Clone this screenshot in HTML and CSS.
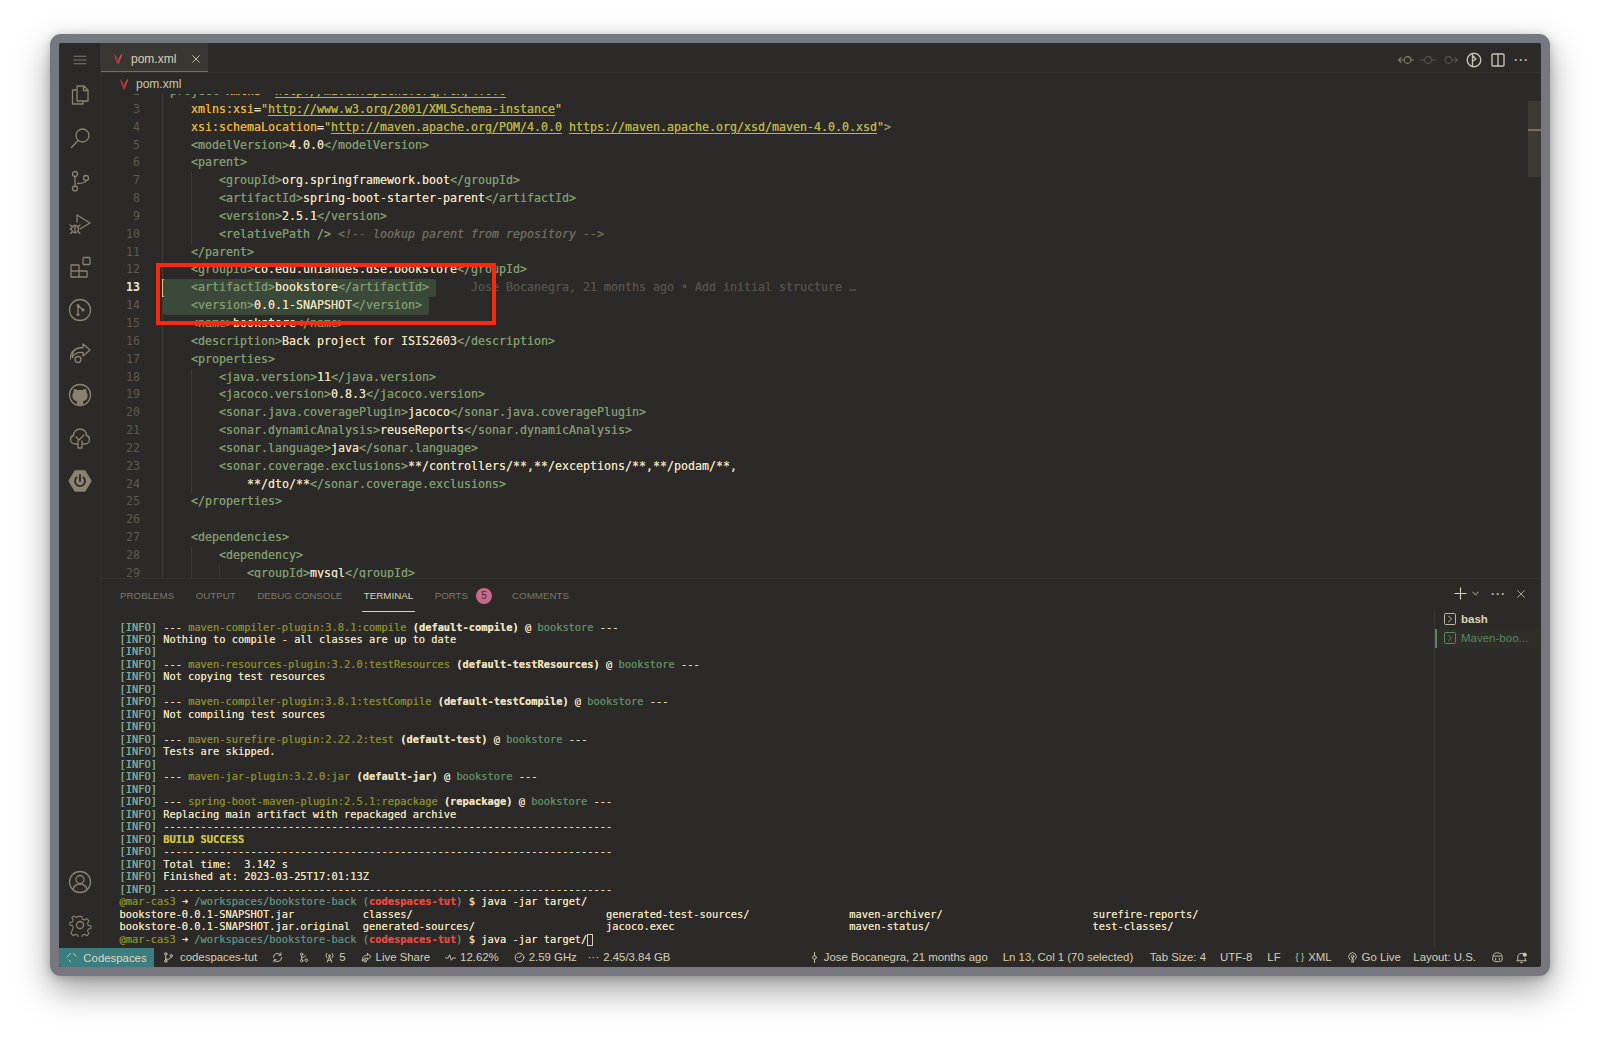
FILE: index.html
```html
<!DOCTYPE html>
<html lang="en">
<head>
<meta charset="utf-8">
<title>pom.xml</title>
<link rel="stylesheet" href="styles.css">
</head>
<body>
<svg class="defs" aria-hidden="true"><defs><linearGradient id="mv" x1="0" y1="1" x2="1" y2="0"><stop offset="0" stop-color="#7a2a6a"/><stop offset=".5" stop-color="#c8303a"/><stop offset="1" stop-color="#e88a2a"/></linearGradient></defs></svg>
<div class="window">
  <span class="grip"><i></i><i></i><i></i></span>
  <div class="main">
    <nav class="activity">
      <div class="menu"><svg class="ico" viewBox="0 0 24 24"><path d="M4 7h16M4 12h16M4 17h16"/></svg></div>
      <div class="act"><svg class="ico big" viewBox="0 0 24 24"><path d="M9 3h7l4 4v11H9zM15.500 3v4.500H20M9 7H4.500v14H15v-3"/></svg></div>
      <div class="act"><svg class="ico big" viewBox="0 0 24 24"><circle cx="14.500" cy="9.500" r="6.500"/><path d="M10 14.500 3.500 21.500"/></svg></div>
      <div class="act"><svg class="ico big" viewBox="0 0 24 24"><circle cx="7" cy="5" r="2.500"/><circle cx="7" cy="19.500" r="2.500"/><circle cx="18" cy="9" r="2.500"/><path d="M7 7.500v9.500M9.500 14.500c5 0 8.500-1 8.500-3"/></svg></div>
      <div class="act"><svg class="ico big" viewBox="0 0 24 24"><path d="M9 3l13 8-10 6M9 3v7"/><circle cx="7" cy="17" r="3.500"/><path d="M2 13l2.500 2M2 17h1.500M2.500 21.500l2-2M12 13l-2.500 2M12 21.500l-2-2M7 13.500v7"/></svg></div>
      <div class="act"><svg class="ico big" viewBox="0 0 24 24"><path d="M3 10h8v12H3zM3 16h16v6h-8M11 10v6"/><rect x="15" y="2.500" width="7" height="7" rx="1"/></svg></div>
      <div class="act"><svg class="ico big" viewBox="0 0 24 24"><circle cx="12" cy="12" r="10.500"/><circle cx="10" cy="7.500" r=".9"/><circle cx="10" cy="16.500" r=".9"/><circle cx="15" cy="12" r=".9"/><path d="M10 8v8M10.500 8l4 3.500"/></svg></div>
      <div class="act"><svg class="ico big" viewBox="0 0 24 24"><path d="M15 3l7 6-7 6v-3.500c-6-.5-9 1-10.500 5-1-6 3-10 10.500-10zM2.500 18c-.5-5 2-9 7-11"/><circle cx="10" cy="18.500" r="3"/></svg></div>
      <div class="act"><svg class="ico big" viewBox="0 0 24 24"><circle cx="12" cy="12" r="10.500"/><path class="solid" d="M9.500 21v-3.500c-3-.2-4.500-2-4.500-5 0-1.200.4-2.200 1.100-3-.2-.8-.1-1.800.3-2.800 1 0 2 .5 2.800 1.100a9 9 0 0 1 5.600 0c.8-.6 1.800-1.100 2.800-1.100.4 1 .5 2 .3 2.800.7.800 1.100 1.800 1.100 3 0 3-1.500 4.800-4.500 5V21z"/></svg></div>
      <div class="act"><svg class="ico big" viewBox="0 0 24 24"><path d="M10 18H7.500c-3 0-5-2-5-4.500 0-2 1-3.500 3-4 0-4 3-6.500 6.500-6.500s6.500 2.500 6.500 6.500c2 .5 3 2 3 4 0 2.500-2 4.500-5 4.500H14M10 15v7h4v-7M8 11l3 3 5-5"/></svg></div>
      <div class="act"><svg class="ico big" viewBox="0 0 24 24"><path class="solid" d="M7 2h10l6 10-6 10H7L1 12z"/><path class="cut" d="M8.500 8.500a5 5 0 1 0 7 0M12 6v6"/></svg></div>
      <div class="fill"></div>
      <div class="act"><svg class="ico big" viewBox="0 0 24 24"><circle cx="12" cy="12" r="10.500"/><circle cx="12" cy="9.500" r="4"/><path d="M5 19.500c1-3.500 3.500-5.500 7-5.500s6 2 7 5.500"/></svg></div>
      <div class="act"><svg class="ico big" viewBox="0 0 24 24"><circle cx="12" cy="12" r="3.500"/><path d="M10 2h4l.7 3.200 2.300 1 2.800-1.700 2.600 2.800-1.700 2.700 1 2.300 3 .7v3l-3 .7-1 2.300 1.700 2.700-2.600 2.800-2.800-1.700-2.300 1-.7 3h-4l-.7-3-2.300-1-2.800 1.700-2.600-2.800L4.100 15l-1-2.300-3-.7V9l3-.7 1-2.300L2.400 3.300 5 1.500l2.800 1.700 1.500-.8z" transform="translate(1.700 1.700) scale(.86)"/></svg></div>
    </nav>
    <div class="workbench">
      <header class="tabs">
        <div class="tab">
          <svg class="maven" viewBox="0 0 14 14"><path d="M2 1l4 12h2L12 1C9.500 3 8 6 7 9 6 6 4.500 3 2 1z"/></svg>
          <span>pom.xml</span>
          <svg class="ico close" viewBox="0 0 12 12"><path d="M2 2l8 8M10 2l-8 8"/></svg>
        </div>
        <div class="tools">
          <svg class="ico tool" viewBox="0 0 24 16"><circle cx="14" cy="8" r="4.500"/><path d="M2 8h7M5.500 4.500 2 8l3.500 3.500M19 8h3"/></svg>
          <svg class="ico tool dim" viewBox="0 0 24 16"><circle cx="12" cy="8" r="4.500"/><path d="M2 8h5M17 8h5"/></svg>
          <svg class="ico tool dim" viewBox="0 0 24 16"><circle cx="10" cy="8" r="4.500"/><path d="M15 8h7M18.500 4.500 22 8l-3.500 3.500"/></svg>
          <svg class="ico tool lit" viewBox="0 0 16 16"><circle cx="8" cy="8" r="6.800"/><path d="M6.500 2v12M7 4l3 3-3 2"/></svg>
          <svg class="ico tool lit" viewBox="0 0 16 16"><rect x="2" y="2" width="12" height="12" rx="1"/><path d="M8 2v12"/></svg>
          <span class="dots">···</span>
        </div>
      </header>
      <div class="crumb">
        <svg class="maven" viewBox="0 0 14 14"><path d="M2 1l4 12h2L12 1C9.500 3 8 6 7 9 6 6 4.500 3 2 1z"/></svg>
        <span>pom.xml</span>
      </div>
      <section class="editor">
        <div class="lines">
          <div class="line"><span class="ln">2</span><code class="code"><span class="t">&lt;project</span> <span class="a">xmlns</span>=<span class="s">"</span><span class="u">http://maven.apache.org/POM/4.0.0</span><span class="s">"</span></code></div>
          <div class="line"><span class="ln">3</span><code class="code">    <span class="a">xmlns:xsi</span>=<span class="s">"</span><span class="u">http://www.w3.org/2001/XMLSchema-instance</span><span class="s">"</span></code></div>
          <div class="line"><span class="ln">4</span><code class="code">    <span class="a">xsi:schemaLocation</span>=<span class="s">"</span><span class="u">http://maven.apache.org/POM/4.0.0</span> <span class="u">https://maven.apache.org/xsd/maven-4.0.0.xsd</span><span class="s">"</span><span class="t">&gt;</span></code></div>
          <div class="line"><span class="ln">5</span><code class="code">    <span class="t">&lt;modelVersion&gt;</span>4.0.0<span class="t">&lt;/modelVersion&gt;</span></code></div>
          <div class="line"><span class="ln">6</span><code class="code">    <span class="t">&lt;parent&gt;</span></code></div>
          <div class="line"><span class="ln">7</span><code class="code g2">        <span class="t">&lt;groupId&gt;</span>org.springframework.boot<span class="t">&lt;/groupId&gt;</span></code></div>
          <div class="line"><span class="ln">8</span><code class="code g2">        <span class="t">&lt;artifactId&gt;</span>spring-boot-starter-parent<span class="t">&lt;/artifactId&gt;</span></code></div>
          <div class="line"><span class="ln">9</span><code class="code g2">        <span class="t">&lt;version&gt;</span>2.5.1<span class="t">&lt;/version&gt;</span></code></div>
          <div class="line"><span class="ln">10</span><code class="code g2">        <span class="t">&lt;relativePath /&gt;</span> <span class="c">&lt;!-- lookup parent from repository --&gt;</span></code></div>
          <div class="line"><span class="ln">11</span><code class="code">    <span class="t">&lt;/parent&gt;</span></code></div>
          <div class="line"><span class="ln">12</span><code class="code">    <span class="t">&lt;groupId&gt;</span>co.edu.uniandes.dse.bookstore<span class="t">&lt;/groupId&gt;</span></code></div>
          <div class="line cur"><span class="ln">13</span><code class="code"><span class="sel">    <span class="t">&lt;artifactId&gt;</span>bookstore<span class="t">&lt;/artifactId&gt;</span> </span><span class="blame">     Jose Bocanegra, 21 months ago • Add initial structure …</span></code></div>
          <div class="line"><span class="ln">14</span><code class="code"><span class="sel">    <span class="t">&lt;version&gt;</span>0.0.1-SNAPSHOT<span class="t">&lt;/version&gt;</span> </span></code></div>
          <div class="line"><span class="ln">15</span><code class="code">    <span class="t">&lt;name&gt;</span>bookstore<span class="t">&lt;/name&gt;</span></code></div>
          <div class="line"><span class="ln">16</span><code class="code">    <span class="t">&lt;description&gt;</span>Back project for ISIS2603<span class="t">&lt;/description&gt;</span></code></div>
          <div class="line"><span class="ln">17</span><code class="code">    <span class="t">&lt;properties&gt;</span></code></div>
          <div class="line"><span class="ln">18</span><code class="code g2">        <span class="t">&lt;java.version&gt;</span>11<span class="t">&lt;/java.version&gt;</span></code></div>
          <div class="line"><span class="ln">19</span><code class="code g2">        <span class="t">&lt;jacoco.version&gt;</span>0.8.3<span class="t">&lt;/jacoco.version&gt;</span></code></div>
          <div class="line"><span class="ln">20</span><code class="code g2">        <span class="t">&lt;sonar.java.coveragePlugin&gt;</span>jacoco<span class="t">&lt;/sonar.java.coveragePlugin&gt;</span></code></div>
          <div class="line"><span class="ln">21</span><code class="code g2">        <span class="t">&lt;sonar.dynamicAnalysis&gt;</span>reuseReports<span class="t">&lt;/sonar.dynamicAnalysis&gt;</span></code></div>
          <div class="line"><span class="ln">22</span><code class="code g2">        <span class="t">&lt;sonar.language&gt;</span>java<span class="t">&lt;/sonar.language&gt;</span></code></div>
          <div class="line"><span class="ln">23</span><code class="code g2">        <span class="t">&lt;sonar.coverage.exclusions&gt;</span>**/controllers/**,**/exceptions/**,**/podam/**,</code></div>
          <div class="line"><span class="ln">24</span><code class="code g2">            **/dto/**<span class="t">&lt;/sonar.coverage.exclusions&gt;</span></code></div>
          <div class="line"><span class="ln">25</span><code class="code">    <span class="t">&lt;/properties&gt;</span></code></div>
          <div class="line"><span class="ln">26</span><code class="code"> </code></div>
          <div class="line"><span class="ln">27</span><code class="code">    <span class="t">&lt;dependencies&gt;</span></code></div>
          <div class="line"><span class="ln">28</span><code class="code g2">        <span class="t">&lt;dependency&gt;</span></code></div>
          <div class="line"><span class="ln">29</span><code class="code g3">            <span class="t">&lt;groupId&gt;</span>mysql<span class="t">&lt;/groupId&gt;</span></code></div>
        </div>
        <div class="scroll"><i></i></div>
        <div class="redbox"></div>
      </section>
      <section class="panel">
        <div class="ptabs">
          <span class="ptab">Problems</span>
          <span class="ptab">Output</span>
          <span class="ptab">Debug Console</span>
          <span class="ptab on">Terminal</span>
          <span class="ptab ports">Ports</span><b class="badge">5</b>
          <span class="ptab">Comments</span>
          <div class="pacts">
            <svg class="ico plus" viewBox="0 0 14 14"><path d="M7 1v12M1 7h12"/></svg>
            <svg class="ico chev" viewBox="0 0 10 10"><path d="M2 3.500l3 3 3-3"/></svg>
            <span class="dots">···</span>
            <svg class="ico pclose" viewBox="0 0 12 12"><path d="M2 2l8 8M10 2l-8 8"/></svg>
          </div>
        </div>
        <div class="pbody">
<pre class="term"><span class="i">[INFO]</span> <span class="k">---</span> <span class="o">maven-compiler-plugin:3.8.1:compile</span> <b>(default-compile)</b> @ <span class="g">bookstore</span> <span class="k">---</span>
<span class="i">[INFO]</span> Nothing to compile - all classes are up to date
<span class="i">[INFO]</span>
<span class="i">[INFO]</span> <span class="k">---</span> <span class="o">maven-resources-plugin:3.2.0:testResources</span> <b>(default-testResources)</b> @ <span class="g">bookstore</span> <span class="k">---</span>
<span class="i">[INFO]</span> Not copying test resources
<span class="i">[INFO]</span>
<span class="i">[INFO]</span> <span class="k">---</span> <span class="o">maven-compiler-plugin:3.8.1:testCompile</span> <b>(default-testCompile)</b> @ <span class="g">bookstore</span> <span class="k">---</span>
<span class="i">[INFO]</span> Not compiling test sources
<span class="i">[INFO]</span>
<span class="i">[INFO]</span> <span class="k">---</span> <span class="o">maven-surefire-plugin:2.22.2:test</span> <b>(default-test)</b> @ <span class="g">bookstore</span> <span class="k">---</span>
<span class="i">[INFO]</span> Tests are skipped.
<span class="i">[INFO]</span>
<span class="i">[INFO]</span> <span class="k">---</span> <span class="o">maven-jar-plugin:3.2.0:jar</span> <b>(default-jar)</b> @ <span class="g">bookstore</span> <span class="k">---</span>
<span class="i">[INFO]</span>
<span class="i">[INFO]</span> <span class="k">---</span> <span class="o">spring-boot-maven-plugin:2.5.1:repackage</span> <b>(repackage)</b> @ <span class="g">bookstore</span> <span class="k">---</span>
<span class="i">[INFO]</span> Replacing main artifact with repackaged archive
<span class="i">[INFO]</span> ------------------------------------------------------------------------
<span class="i">[INFO]</span> <b class="y">BUILD SUCCESS</b>
<span class="i">[INFO]</span> ------------------------------------------------------------------------
<span class="i">[INFO]</span> Total time:  3.142 s
<span class="i">[INFO]</span> Finished at: 2023-03-25T17:01:13Z
<span class="i">[INFO]</span> ------------------------------------------------------------------------
<span class="o">@mar-cas3</span> ➜ <span class="p">/workspaces/bookstore-back</span> <span class="p">(</span><b class="r">codespaces-tut</b><span class="p">)</span> $ java -jar target/
bookstore-0.0.1-SNAPSHOT.jar           classes/                               generated-test-sources/                maven-archiver/                        surefire-reports/
bookstore-0.0.1-SNAPSHOT.jar.original  generated-sources/                     jacoco.exec                            maven-status/                          test-classes/
<span class="o">@mar-cas3</span> ➜ <span class="p">/workspaces/bookstore-back</span> <span class="p">(</span><b class="r">codespaces-tut</b><span class="p">)</span> $ java -jar target/<span class="caret"> </span></pre>
          <aside class="tlist">
            <div class="titem"><svg class="ico tic" viewBox="0 0 12 12"><rect x=".5" y=".5" width="11" height="11" rx="1"/><path d="M4.500 3l3 3-3 3"/></svg><b>bash</b></div>
            <div class="titem act2"><svg class="ico tic" viewBox="0 0 12 12"><rect x=".5" y=".5" width="11" height="11" rx="1"/><path d="M4.500 3l3 3-3 3"/></svg><span>Maven-boo...</span></div>
          </aside>
        </div>
      </section>
    </div>
  </div>
  <footer class="status">
    <div class="remote"><svg class="ico sic" viewBox="0 0 12 12"><path d="M5 1.500 1 5.500M5 10.500 3 8.500M8 1.500l3 3"/></svg><span>Codespaces</span></div>
    <div class="st first"><svg class="ico sic" viewBox="0 0 12 12"><circle cx="3" cy="2" r="1.300"/><circle cx="3" cy="10" r="1.300"/><circle cx="9" cy="4" r="1.300"/><path d="M3 3.300v5.400M3 8c4 0 6-1 6-2.700"/></svg><span>codespaces-tut</span></div>
    <div class="st"><svg class="ico sic" viewBox="0 0 12 12"><path d="M1.500 6a4.500 4.500 0 0 1 8-2.800M10.500 6a4.500 4.500 0 0 1-8 2.800M9.800 1v2.500H7.300M2.200 11V8.500h2.500"/></svg></div>
    <div class="st"><svg class="ico sic" viewBox="0 0 12 12"><circle cx="4" cy="2.500" r="1.300"/><circle cx="4" cy="9.500" r="1.300"/><path d="M4 4v4M4 6c3 0 4-1 4-2M8 8a1.500 1.500 0 1 0 .1-.1"/></svg></div>
    <div class="st"><svg class="ico sic" viewBox="0 0 12 12"><circle cx="6" cy="4" r="1"/><path d="M6 5l-2.500 6M6 5l2.500 6M3 1.500a4 4 0 0 0 0 5M9 1.500a4 4 0 0 1 0 5M4.200 9h3.600"/></svg><span>5</span></div>
    <div class="st"><svg class="ico sic" viewBox="0 0 12 12"><path d="M7 1.500l4 3.500-4 3.500V6.500C4 6.500 2.500 7.500 1.500 10 1 6 3 3.500 7 3.500z"/><circle cx="4.500" cy="9.700" r="1.400"/></svg><span>Live Share</span></div>
    <div class="st"><svg class="ico sic" viewBox="0 0 12 12"><path d="M.5 6.500h3L5 3l2 6 1.500-2.500h3"/></svg><span>12.62%</span></div>
    <div class="st"><svg class="ico sic" viewBox="0 0 12 12"><circle cx="6" cy="6" r="4.800"/><path d="M6 6l2-2.500M3.500 6h.5"/></svg><span>2.59 GHz</span></div>
    <div class="st mem"><span>···</span><span>2.45/3.84 GB</span></div>
    <div class="fill"></div>
    <div class="st"><svg class="ico sic" viewBox="0 0 12 12"><circle cx="6" cy="6" r="2"/><path d="M6 .5V4M6 8v3.500"/></svg><span>Jose Bocanegra, 21 months ago</span></div>
    <div class="st">Ln 13, Col 1 (70 selected)</div>
    <div class="st wide">Tab Size: 4</div>
    <div class="st close-l">UTF-8</div>
    <div class="st">LF</div>
    <div class="st lang"><span class="brace">{ }</span><span>XML</span></div>
    <div class="st"><svg class="ico sic" viewBox="0 0 12 12"><circle cx="6" cy="5" r="1.500"/><path d="M3 8a4.200 4.200 0 1 1 6 0M6 6.500 5 11h2z"/></svg><span>Go Live</span></div>
    <div class="st near">Layout: U.S.</div>
    <div class="st bot"><svg class="ico sic big2" viewBox="0 0 14 14"><path d="M2 7c0-3 1-5 5-5s5 2 5 5v3c-2 2-8 2-10 0zM3 5.500h8M5 8v1.500M9 8v1.500"/></svg></div>
    <div class="st bell"><svg class="ico sic big2" viewBox="0 0 14 14"><path d="M3 10V6.500a4 4 0 0 1 6-3.500M2 10.500h10M11 8v2.500M6 12.500h2"/><circle class="dotfill" cx="10.500" cy="4" r="1.800"/></svg></div>
  </footer>
</div>
</body>
</html>
```
FILE: styles.css
```css
* { box-sizing: border-box; }
html, body { margin: 0; height: 100%; background: #fff; overflow: hidden; }
body { padding: 34px 50px 66px; font-family: "Liberation Sans", Arial, sans-serif; }
.defs { display: block; width: 0; height: 0; }

.window {
  position: relative;
  height: 942px;
  border: 9px solid #77777f;
  border-radius: 11px;
  background: #2b2a28;
  display: flex;
  flex-direction: column;
  box-shadow: 0 14px 34px rgba(0, 0, 0, .38), 0 2px 10px rgba(0, 0, 0, .2);
  overflow: hidden;
}
.grip {
  position: absolute;
  top: 3px;
  right: -7px;
  display: flex;
  flex-direction: column;
  gap: 2px;
}
.grip i { width: 4px; height: 4px; border-radius: 50%; background: #a9a9af; }

.main { flex: 1; min-height: 0; display: flex; }
.fill { flex: 1; }

.ico { fill: none; stroke: #8b8270; stroke-width: 1.4; stroke-linecap: round; stroke-linejoin: round; }

.activity { width: 42px; flex: none; display: flex; flex-direction: column; align-items: center; padding-bottom: 2px; border-right: 1px solid #353330; }
.menu { height: 31px; width: 100%; display: flex; align-items: center; justify-content: center; padding-top: 2px; }
.menu .ico { width: 18px; height: 18px; stroke-width: 1.2; }
.act { height: 42.86px; width: 100%; flex: none; display: flex; align-items: center; justify-content: center; }
.big { width: 24px; height: 24px; stroke-width: 1.3; }
.solid { fill: #8b8270; }
.cut { stroke: #2b2a28; stroke-width: 1.8; }

.workbench { flex: 1; min-width: 0; display: flex; flex-direction: column; }

.tabs { height: 30px; flex: none; display: flex; align-items: stretch; justify-content: space-between; border-bottom: 1px solid #353330; }
.tab {
  width: 107px;
  display: flex;
  align-items: center;
  padding: 4px 0 0 11px;
  background: #393733;
  border-bottom: 1px solid #5d7c59;
  color: #d9d1b4;
  font-size: 12px;
}
.maven { width: 12px; height: 12px; fill: url(#mv); stroke: none; }
.tab span { margin-left: 7px; }
.close { width: 10px; height: 10px; margin-left: 15px; stroke: #bdb6a2; stroke-width: 1.2; }

.tools { display: flex; align-items: center; gap: 4px; padding: 4px 12px 0 0; }
.tool { width: 18px; height: 14px; }
.tool.dim { stroke: #5c5a52; }
.tool.lit { stroke: #c4c0b4; width: 16px; height: 16px; margin-left: 3.5px; }
.dots { color: #bdb6a2; font-size: 12px; font-weight: 700; letter-spacing: 1px; margin-left: 4.5px; }

.crumb { height: 21px; flex: none; display: flex; align-items: flex-start; padding: 4px 0 0 17px; color: #cdc6ac; font-size: 12px; line-height: 14px; }
.crumb .maven { margin-top: 1px; }
.crumb span { margin-left: 6px; }

.editor { position: relative; height: 484px; flex: none; overflow: hidden; }
.lines { margin-top: -11px; font-family: "DejaVu Sans Mono", monospace; font-size: 11.63px; }
.line { display: flex; height: 17.85px; line-height: 17.85px; }
.ln { width: 39px; flex: none; text-align: right; color: #5f5a4e; margin-right: 22px; }
.cur .ln { color: #ece5cf; font-weight: 700; }
.code {
  font: inherit;
  white-space: pre;
  flex: 1;
  color: #eadfbb;
  border-left: 1px solid #3d3b36;
  text-shadow: 0 0 .5px currentColor;
}
.g2 { background: linear-gradient(#3d3b36, #3d3b36) 28px 0 / 1px 100% no-repeat; }
.g3 { background: linear-gradient(#3d3b36, #3d3b36) 28px 0 / 1px 100% no-repeat, linear-gradient(#3d3b36, #3d3b36) 56px 0 / 1px 100% no-repeat; }
.t { color: #7f9a6c; }
.a { color: #e8b13c; }
.s { color: #b9b24a; }
.u { color: #b9b24a; text-decoration: underline; text-underline-offset: 2px; }
.c { color: #6f6a5a; font-style: italic; }
.sel { background: #3a4939; border-radius: 2px; display: inline-block; height: 17.85px; }
.blame { color: #55514a; }
.cur .code { box-shadow: inset 2px 0 0 #d9c791; border-left-color: #d9c791; }

.scroll { position: absolute; top: 7px; right: 0; width: 13px; height: 76px; background: #3d3935; }
.scroll i { display: block; margin-top: 28px; height: 1.5px; background: #7c7058; }
.redbox {
  position: absolute;
  left: 55px;
  top: 169px;
  width: 340px;
  height: 62px;
  border: 4px solid #f8290f;
}

.panel { flex: 1; min-height: 0; display: flex; flex-direction: column; border-top: 1px solid #353330; }
.ptabs { height: 33px; flex: none; display: flex; align-items: center; padding-left: 19px; font-size: 9.75px; color: #7e7967; }
.ptab { text-transform: uppercase; margin-right: 21.5px; position: relative; line-height: 33px; }
.ptab.on { color: #dcd4b6; }
.ptab.on::after { content: ""; position: absolute; left: -2px; right: -2px; bottom: 0; height: 1px; background: #dcd4b6; }
.ptab.ports { margin-right: 8px; }
.badge { width: 16px; height: 16px; margin-right: 20px; border-radius: 50%; background: #c96a8d; color: #3a2a2e; font-size: 10px; font-weight: 400; text-align: center; line-height: 16px; }
.pacts { margin: -4px 0 0 auto; display: flex; align-items: center; padding-right: 15px; }
.plus { width: 13px; height: 13px; stroke: #d9d1b4; stroke-width: 1.2; }
.chev { width: 9px; height: 9px; margin-left: 4px; stroke: #8b8270; }
.pacts .dots { margin-left: 11px; }
.pclose { width: 10px; height: 10px; margin-left: 10px; stroke: #a9a393; stroke-width: 1.2; }

.pbody { flex: 1; min-height: 0; display: flex; }
.term {
  flex: 1;
  min-width: 0;
  margin: 0;
  padding: 8.5px 0 0 18.5px;
  font-family: "DejaVu Sans Mono", monospace;
  font-size: 10.37px;
  line-height: 12.49px;
  color: #eadfbb;
  overflow: hidden;
  text-shadow: 0 0 .5px currentColor;
}
.term b { font-weight: 700; }
.i { color: #7fa898; }
.k { color: #eadfbb; }
.o { color: #87892c; }
.g { color: #5e8a62; }
.p { color: #5f8a80; }
.y { color: #c9c23a; }
.r { color: #e2493e; }
.caret { display: inline-block; width: 6px; height: 12px; border: 1px solid #d9d1b4; vertical-align: -2px; }

.tlist { width: 107px; flex: none; margin-top: -3px; border-left: 1px solid #3a3835; font-size: 11.5px; }
.titem { height: 19.5px; display: flex; align-items: center; padding-left: 9px; gap: 5px; color: #dcd4b6; }
.titem.act2 { color: #568a58; box-shadow: inset 2px 0 0 #568a58; background: #2f2e2b; }
.tic { width: 12px; height: 12px; flex: none; stroke: #bdb6a2; stroke-width: 1; }
.act2 .tic { stroke: #568a58; }

.status { height: 19px; flex: none; display: flex; align-items: center; padding-bottom: 1px; font-size: 11.4px; color: #d6ceb2; }
.remote { width: 95px; height: 19px; margin-bottom: -1px; display: flex; align-items: center; justify-content: center; gap: 6px; background: #3c7d80; color: #dfd9bf; border-radius: 0 0 0 3px; }
.st { display: flex; align-items: center; gap: 4px; padding: 0 7.5px; white-space: nowrap; }
.st.first { padding-left: 9px; gap: 6px; }
.st.mem { margin-left: -4px; }
.st.wide { padding-left: 9px; }
.st.close-l { padding-left: 6.5px; }
.st.lang { padding-left: 7.5px; }
.st.near { padding-left: 5px; }
.st.bot { padding-right: 5.5px; }
.st.bell { padding: 0 13px 0 5.5px; }
.sic { width: 11px; height: 11px; stroke: #cfc7ac; stroke-width: 1; }
.big2 { width: 13px; height: 13px; }
.dotfill { fill: #cfc7ac; }
.brace { font-size: 9px; }
```
